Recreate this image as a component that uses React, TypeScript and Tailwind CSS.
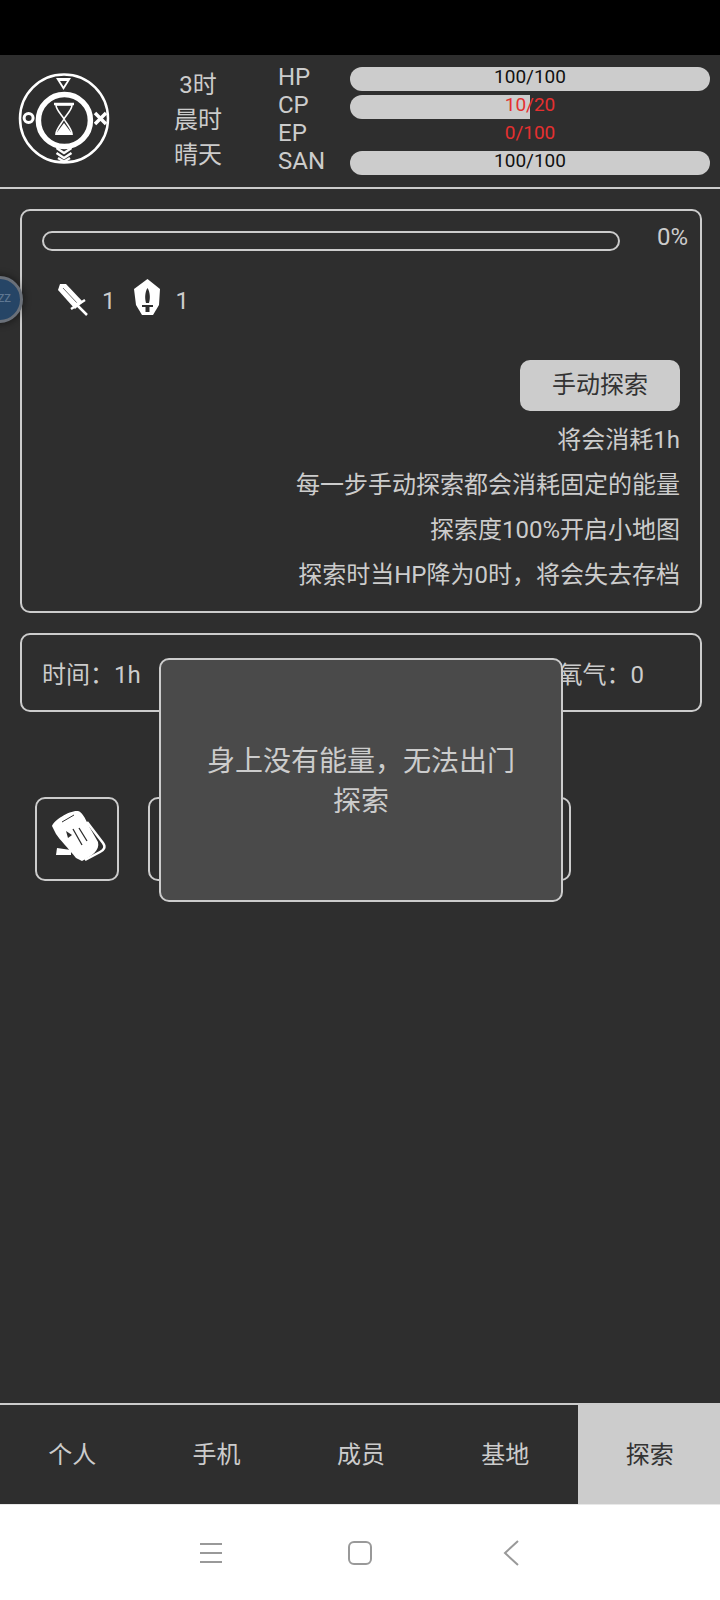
const font = "font-['Roboto','Noto_Sans_CJK_SC',sans-serif]";

function Emblem() {
  return (
    <svg width="92" height="92" viewBox="0 0 92 92" fill="none" className="mt-[18px] shrink-0 self-start">
      <circle cx="46" cy="45.5" r="44" stroke="#fff" strokeWidth="2.5" />
      <circle cx="46.4" cy="47.5" r="26" stroke="#fff" strokeWidth="5.500" />
      <path d="M38 5h15l-7.5 12z" fill="#fff" />
      <path d="M42 8h7l-3.5 5.5z" fill="#2e2e2e" />
      <circle cx="10.6" cy="45" r="4.5" stroke="#fff" strokeWidth="3" />
      <path d="M77 40l11 11M88 40L77 51" stroke="#fff" strokeWidth="3.5" />
      <path d="M38.5 75l7.5 5 7.5-5M38.5 80l7.5 5 7.5-5M40 85l6 3.5 6-3.5" stroke="#fff" strokeWidth="2.4" />
      <path d="M36 31h20" stroke="#fff" strokeWidth="2.5" />
      <path d="M38 32h16c0 5-6 10-8 14 2 4 8 10 8 15H38c0-5 6-11 8-15-2-4-8-9-8-14z" stroke="#fff" strokeWidth="1.6" />
      <path d="M37 62l9-12 9 12z" fill="#fff" />
    </svg>
  );
}

function SwordIcon() {
  return (
    <svg width="30" height="33" viewBox="0 0 30 33" fill="none" className="mt-1">
      <path d="M2 1l6 0 17 18-8 7L0 7z" fill="#fff" />
      <path d="M5 5l14 15" stroke="#2e2e2e" strokeWidth="0.7" />
      <path d="M13 26l14-9M17 20l12 12" stroke="#fff" strokeWidth="2.5" />
    </svg>
  );
}

function ShieldIcon() {
  return (
    <svg width="27" height="37" viewBox="0 0 27 37" className="ml-[18px]">
      <path d="M13.5 0L26 10l-1 16-6 10H8L2 26 0 10z" fill="#fff" />
      <path d="M13.5 9c2.500 4 3 10 1.500 15h-3c-1.500-5-1-11 1.500-15zM8 26h11v2h-3.500v5h-4v-5H8z" fill="#2e2e2e" />
    </svg>
  );
}

function LogIcon() {
  return (
    <svg width="80" height="80" viewBox="-3 -1 80 80" fill="none">
      <path d="M12 26C14 20 30 10 38 11c4 1 6 5 12 17l8 14c2 8-6 14-16 19l-6-3C28 48 20 40 16 34z" fill="#fff" />
      <path d="M22 22l12-7" stroke="#2e2e2e" strokeWidth="1" />
      <path d="M26 31l6 4-4 3z" fill="#2e2e2e" />
      <path d="M33 29l9 16M39 28l8 13" stroke="#2e2e2e" strokeWidth="1.300" />
      <path d="M47 22l16 21c3 4 1 7-3 9l-15 8" stroke="#fff" strokeWidth="2.500" />
      <path d="M17 48l14 2v5l-15 0z" fill="#fff" />
    </svg>
  );
}

function Stat({ value, fill, red }: { value: string; fill: string; red?: boolean }) {
  return (
    <div className="relative h-6 w-[360px]">
      <div className={`h-full bg-[#cccccc] ${fill}`} />
      <div className={`absolute inset-x-0 top-0 flex h-[19px] items-center justify-center text-[19px] leading-[19px] ${red ? "text-[#e53030]" : "text-[#111]"}`}>{value}</div>
    </div>
  );
}

export default function App() {
  return (
    <div className={`${font} relative flex h-[1600px] w-[720px] flex-col overflow-hidden bg-[#2e2e2e] text-[#cccccc]`}>
      <div className="h-[55px] shrink-0 bg-black" />

      <div className="flex h-[134px] shrink-0 items-center border-b-2 border-[#cccccc] pl-[18px]">
        <Emblem />
        <div className="mb-[2px] ml-[64px] flex w-[48px] flex-col items-center text-[24px] leading-[35px]">
          <span>3时</span>
          <span>晨时</span>
          <span>晴天</span>
        </div>
        <div className="mb-1 ml-[56px] flex flex-col text-[24px] leading-[28px]">
          <span>HP</span>
          <span>CP</span>
          <span>EP</span>
          <span>SAN</span>
        </div>
        <div className="absolute left-[350px] top-[67px] flex flex-col gap-1">
          <Stat value="100/100" fill="w-full rounded-[12px]" />
          <Stat value="10/20" fill="w-1/2 rounded-l-[12px]" red />
          <Stat value="0/100" fill="w-0" red />
          <Stat value="100/100" fill="w-full rounded-[12px]" />
        </div>
      </div>

      <div className="ml-5 mr-[18px] mt-5 flex h-[404px] shrink-0 flex-col rounded-[10px] border-2 border-[#cccccc] px-5 pt-5">
        <div className="flex h-5 items-start">
          <div className="h-5 w-[578px] rounded-[10px] border-2 border-[#cccccc]" />
          <span className="-mr-[8px] -mt-[6px] ml-auto text-[24px] leading-6">0%</span>
        </div>
        <div className="mt-[28px] flex h-[37px] items-start pl-4 text-[24px] leading-6">
          <SwordIcon />
          <span className="ml-[14px] mt-[10px]">1</span>
          <ShieldIcon />
          <span className="ml-[15px] mt-[10px]">1</span>
        </div>
        <div className="mt-[44px] flex flex-col items-end text-[24px] leading-[45px]">
          <button className="mb-[7px] flex h-[51px] w-[160px] items-center justify-center rounded-[10px] bg-[#cccccc] text-[24px] text-[#333]">手动探索</button>
          <span>将会消耗1h</span>
          <span>每一步手动探索都会消耗固定的能量</span>
          <span>探索度100%开启小地图</span>
          <span>探索时当HP降为0时，将会失去存档</span>
        </div>
      </div>

      <div className="ml-5 mr-[18px] mt-5 flex h-[79px] shrink-0 items-center justify-between rounded-[10px] border-2 border-[#cccccc] pl-5 pr-14 pt-1 text-[24px]">
        <span>时间：1h</span>
        <span>氧气：0</span>
      </div>

      <div className="mt-[85px] flex shrink-0 gap-[29px] pl-[35px]">
        <div className="flex h-[84px] w-[84px] items-center justify-center rounded-[10px] border-2 border-[#cccccc]">
          <LogIcon />
        </div>
        <div className="h-[84px] w-[423px] rounded-[10px] border-2 border-[#cccccc]" />
      </div>

      <div className="mt-auto flex h-[101px] shrink-0 border-t-2 border-[#cccccc] text-[24px]">
        {["个人", "手机", "成员", "基地"].map((t) => (
          <div key={t} className="flex w-[144.4px] shrink-0 items-center justify-center">{t}</div>
        ))}
        <div className="flex flex-1 items-center justify-center bg-[#cccccc] pl-0.5 text-[#333]">探索</div>
      </div>

      <div className="flex h-[96px] shrink-0 items-center border-t border-[#e8e8e8] bg-white">
        <div className="ml-[200px] flex flex-col gap-[7px]">
          <div className="h-0.5 w-[22px] bg-[#999]" />
          <div className="h-0.5 w-[22px] bg-[#999]" />
          <div className="h-0.5 w-[22px] bg-[#999]" />
        </div>
        <div className="ml-[126px] h-6 w-6 rounded-[6px] border-2 border-[#999]" />
        <svg width="16" height="26" viewBox="0 0 16 26" fill="none" className="ml-[131px]">
          <path d="M15 1L2 13l13 12" stroke="#999" strokeWidth="2" />
        </svg>
      </div>

      <div className="absolute left-[159px] top-[658px] flex h-[244px] w-[404px] items-center justify-center rounded-[10px] border-2 border-[#cccccc] bg-[#4a4a4a] px-10 pt-[3px] text-center text-[28px] leading-[40px]">
        身上没有能量，无法出门探索
      </div>

      <div className="absolute left-[-24px] top-[276px] flex h-[47px] w-[47px] items-center justify-end rounded-full border-[3px] border-[#6a7079] bg-[#264566] pr-[9px] text-[11px] font-medium text-[#5f7792] shadow-[0_0_6px_2px_rgba(0,0,0,0.35)]">ZZ</div>
    </div>
  );
}
